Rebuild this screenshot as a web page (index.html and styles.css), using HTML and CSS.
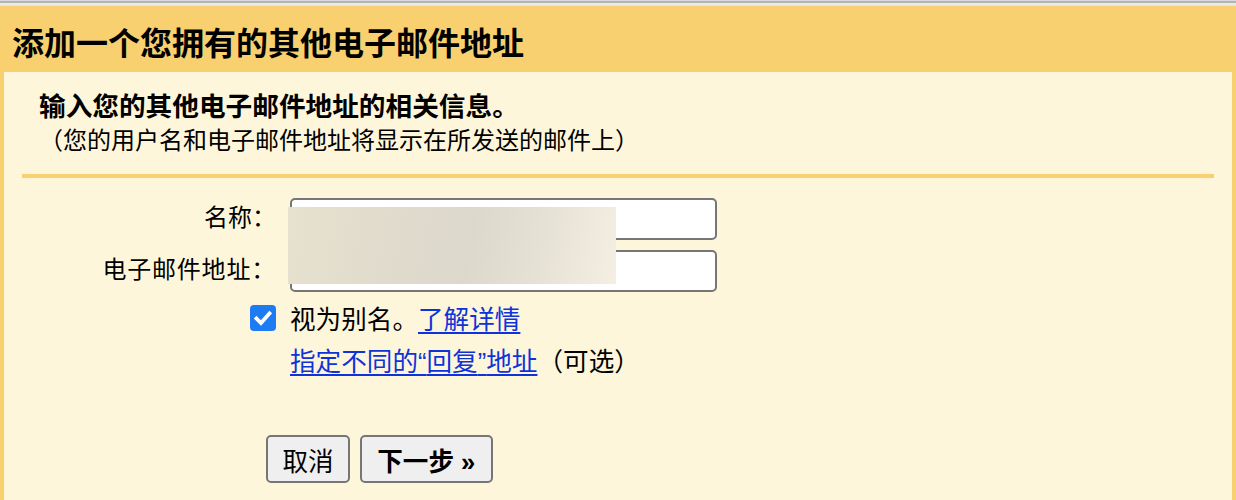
FILE: index.html
```html
<!DOCTYPE html>
<html lang="zh-CN">
<head>
<meta charset="utf-8">
<title>添加一个您拥有的其他电子邮件地址</title>
<link rel="stylesheet" href="styles.css">
</head>
<body>
<div class="edge"></div>
<div class="dialog">
  <div class="header">
    <h1 class="title">添加一个您拥有的其他电子邮件地址</h1>
  </div>
  <div class="content">
    <div class="intro">
      <p class="lead">输入您的其他电子邮件地址的相关信息。</p>
      <p class="note">（您的用户名和电子邮件地址将显示在所发送的邮件上）</p>
    </div>
    <div class="rule"></div>
    <form class="form">
      <label class="label" for="name">名称：</label>
      <input class="field" id="name" type="text">
      <label class="label label-long" for="email">电子邮件地址：</label>
      <input class="field" id="email" type="text">
      <span class="check-cell">
        <span class="checkbox" role="checkbox" aria-checked="true">
          <svg viewBox="0 0 26 26" width="26" height="26" aria-hidden="true">
            <path d="M6.5 13.5 L11 18 L19.5 8.5" fill="none" stroke="#fff" stroke-width="3.8" stroke-linecap="square" stroke-linejoin="miter"/>
          </svg>
        </span>
      </span>
      <span class="line">视为别名。<a class="link" href="#">了解详情</a></span>
      <span class="spacer"></span>
      <span class="line"><a class="link" href="#">指定不同的<span class="latin">“</span>回复<span class="latin">”</span>地址</a>（可选）</span>
      <div class="redact"></div>
    </form>
    <div class="buttons">
      <button class="btn" type="button">取消</button>
      <button class="btn btn-next" type="button">下一步<span class="latin"> »</span></button>
    </div>
  </div>
</div>
</body>
</html>
```
FILE: styles.css
```css
html, body {
  margin: 0;
  padding: 0;
  height: 100%;
  overflow: hidden;
  background: #fef6db;
}

body {
  font-family: "Noto Sans CJK SC", "Noto Sans", sans-serif;
  color: #000;
}

.latin {
  font-family: "Liberation Sans", "Noto Sans", sans-serif;
}

.edge {
  height: 6px;
  background: linear-gradient(to bottom, #dadada 0, #dadada 1px, #b4b4b6 1px, #b4b4b6 3px, #ececec 3px, #e4e4e4 6px);
}

.dialog {
  background: #f9d06f;
  padding: 0 4px;
  min-height: 494px;
  box-sizing: border-box;
}

.header {
  height: 66px;
  box-sizing: border-box;
  padding: 5px 0 0 8px;
}

.title {
  margin: 0;
  font-size: 32px;
  line-height: 61px;
  font-weight: 700;
}

.content {
  background: #fef6db;
  min-height: 428px;
  padding-top: 16px;
}

.intro {
  padding-left: 35px;
}

.lead {
  margin: 0;
  font-size: 26.67px;
  line-height: 34px;
  font-weight: 700;
}

.note {
  margin: 0;
  font-size: 24px;
  line-height: 34px;
}

.rule {
  height: 4px;
  background: #f9d06f;
  margin: 18px 18px 0 18px;
}

.form {
  position: relative;
  display: grid;
  grid-template-columns: 272px 427px;
  column-gap: 14px;
  row-gap: 10px;
  margin-top: 20px;
  align-items: center;
}

.label {
  text-align: right;
  font-size: 24px;
  line-height: 34px;
  margin-top: -6px;
  white-space: nowrap;
}

.label-long {
  letter-spacing: 0.8px;
}

.field {
  box-sizing: border-box;
  width: 427px;
  height: 42px;
  border: 2px solid #767676;
  border-radius: 5px;
  background: #fff;
  margin: 0;
  font-size: 24px;
  padding: 0 8px;
}

.check-cell {
  display: flex;
  justify-content: flex-end;
}

.checkbox {
  width: 26px;
  height: 26px;
  border-radius: 4px;
  background: #1d7cf3;
  display: block;
}

.checkbox svg {
  display: block;
}

.line {
  font-size: 25.6px;
  line-height: 32px;
  white-space: nowrap;
}

.link {
  color: #0d33d9;
  text-decoration: underline;
  text-underline-offset: 3px;
}

.redact {
  position: absolute;
  left: 284px;
  top: 9px;
  width: 328px;
  height: 77px;
  background: linear-gradient(100deg, #e7e1cf 0%, #e0dbcc 30%, #dcd8cc 55%, #e6e2d5 78%, #f4efe2 100%);
}

.buttons {
  display: flex;
  gap: 10px;
  margin: 57px 0 0 262px;
}

.btn {
  box-sizing: border-box;
  height: 48px;
  padding: 0 14.5px;
  border: 2px solid #767676;
  border-radius: 5px;
  background: #efefef;
  font-family: "Noto Sans CJK SC", "Noto Sans", sans-serif;
  font-size: 25.6px;
  color: #000;
}

.btn-next {
  font-weight: 700;
  padding: 0 16px 0 15px;
}
```
